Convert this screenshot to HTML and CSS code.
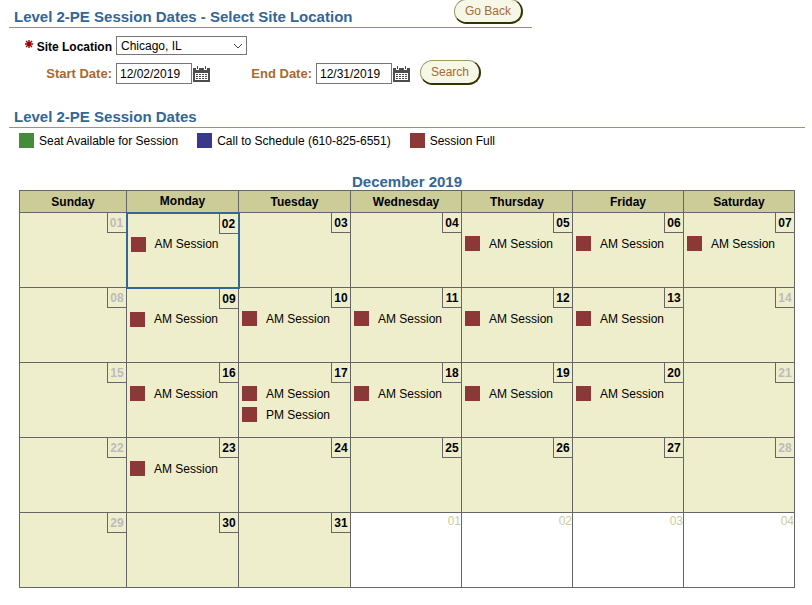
FILE: index.html
```html
<!DOCTYPE html>
<html lang="en">
  <head>
    <meta charset="utf-8">
    <title>Level 2-PE Session Dates</title>
    <link rel="stylesheet" href="styles.css">
  </head>
  <body>
    <!-- calendar icon used by both date fields -->
    <svg class="sprite" aria-hidden="true">
      <symbol id="cal-icon" viewBox="0 0 17 16">
        <path fill="#4d4d4d" d="M0 2h3v2h3V2h5v2h3V2h3v4H0z" />
        <path fill="#4d4d4d" d="M4 0h1v3H4zM12 0h1v3h-1z" />
        <path fill="#4d4d4d" fill-rule="evenodd" d="M0 5h17v11H0zM2 7v7h13V7z" />
        <path fill="#4d4d4d" d="M3 8h2v1H3zM6 8h2v1H6zM9 8h2v1H9zM12 8h2v1h-2zM3 10h2v1H3zM6 10h2v1H6zM9 10h2v1H9zM12 10h2v1h-2zM3 12h2v1H3zM6 12h2v1H6zM9 12h2v1H9zM12 12h2v1h-2z" />
      </symbol>
    </svg>

    <form class="search-form">
      <div class="region-header">
        <h1 class="region-title">Level 2-PE Session Dates - Select Site Location</h1>
        <button type="button" class="btn">Go Back</button>
      </div>
      <div class="field-row">
        <label class="field-label required" for="site">
          <svg class="star" viewBox="0 0 8 8" aria-hidden="true"><path d="M4 0v8M0 4h8M1 1l6 6M7 1L1 7" /></svg>
          Site Location
        </label>
        <select id="site" class="site-select">
          <option>Chicago, IL</option>
        </select>
      </div>
      <div class="field-row date-row">
        <label class="field-label" for="start">Start Date:</label>
        <input type="text" id="start" class="date-input" value="12/02/2019">
        <button type="button" class="cal-btn" aria-label="Pick start date"><svg><use href="#cal-icon" /></svg></button>
        <label class="field-label end-label" for="end">End Date:</label>
        <input type="text" id="end" class="date-input" value="12/31/2019">
        <button type="button" class="cal-btn" aria-label="Pick end date"><svg><use href="#cal-icon" /></svg></button>
        <button type="button" class="btn search-btn">Search</button>
      </div>
    </form>

    <section class="results">
      <h2 class="region-title results-title">Level 2-PE Session Dates</h2>
      <ul class="legend">
        <li><span class="swatch available"></span>Seat Available for Session</li>
        <li><span class="swatch call"></span>Call to Schedule (610-825-6551)</li>
        <li><span class="swatch full"></span>Session Full</li>
      </ul>

      <table class="calendar">
        <caption>December 2019</caption>
        <colgroup>
          <col class="first-col">
          <col span="2" class="wide-col">
          <col span="4">
        </colgroup>
        <thead>
          <tr>
            <th>Sunday</th>
            <th>Monday</th>
            <th>Tuesday</th>
            <th>Wednesday</th>
            <th>Thursday</th>
            <th>Friday</th>
            <th>Saturday</th>
          </tr>
        </thead>
        <tbody>
          <tr>
            <td class="off"><div class="day">01</div></td>
            <td class="today"><div class="day">02</div><div class="session"><span class="swatch full"></span>AM Session</div></td>
            <td><div class="day">03</div></td>
            <td><div class="day">04</div></td>
            <td><div class="day">05</div><div class="session"><span class="swatch full"></span>AM Session</div></td>
            <td><div class="day">06</div><div class="session"><span class="swatch full"></span>AM Session</div></td>
            <td><div class="day">07</div><div class="session"><span class="swatch full"></span>AM Session</div></td>
          </tr>
          <tr>
            <td class="off"><div class="day">08</div></td>
            <td><div class="day">09</div><div class="session"><span class="swatch full"></span>AM Session</div></td>
            <td><div class="day">10</div><div class="session"><span class="swatch full"></span>AM Session</div></td>
            <td><div class="day">11</div><div class="session"><span class="swatch full"></span>AM Session</div></td>
            <td><div class="day">12</div><div class="session"><span class="swatch full"></span>AM Session</div></td>
            <td><div class="day">13</div><div class="session"><span class="swatch full"></span>AM Session</div></td>
            <td class="off"><div class="day">14</div></td>
          </tr>
          <tr>
            <td class="off"><div class="day">15</div></td>
            <td><div class="day">16</div><div class="session"><span class="swatch full"></span>AM Session</div></td>
            <td>
              <div class="day">17</div>
              <div class="session"><span class="swatch full"></span>AM Session</div>
              <div class="session"><span class="swatch full"></span>PM Session</div>
            </td>
            <td><div class="day">18</div><div class="session"><span class="swatch full"></span>AM Session</div></td>
            <td><div class="day">19</div><div class="session"><span class="swatch full"></span>AM Session</div></td>
            <td><div class="day">20</div><div class="session"><span class="swatch full"></span>AM Session</div></td>
            <td class="off"><div class="day">21</div></td>
          </tr>
          <tr>
            <td class="off"><div class="day">22</div></td>
            <td><div class="day">23</div><div class="session"><span class="swatch full"></span>AM Session</div></td>
            <td><div class="day">24</div></td>
            <td><div class="day">25</div></td>
            <td><div class="day">26</div></td>
            <td><div class="day">27</div></td>
            <td class="off"><div class="day">28</div></td>
          </tr>
          <tr>
            <td class="off"><div class="day">29</div></td>
            <td><div class="day">30</div></td>
            <td><div class="day">31</div></td>
            <td class="other-month"><div class="day">01</div></td>
            <td class="other-month"><div class="day">02</div></td>
            <td class="other-month"><div class="day">03</div></td>
            <td class="other-month"><div class="day">04</div></td>
          </tr>
        </tbody>
      </table>
    </section>
  </body>
</html>
```
FILE: styles.css
```css
* {
  box-sizing: border-box;
}
body {
  margin: 0;
  background-color: #fff;
  color: #000;
  font-family: "Liberation Sans", Arial, Helvetica, sans-serif;
  font-size: 12px;
}
.sprite {
  display: none;
}
.search-form {
  width: fit-content;
  margin-left: 9px;
}
.region-header {
  display: flex;
  justify-content: space-between;
  align-items: flex-start;
  height: 28px;
  min-width: 523px;
  padding: 0 9px 0 5px;
  border-bottom: 1px solid #999966;
}
.region-title {
  margin: 0;
  color: #336699;
  font-size: 15px;
  font-weight: bold;
  line-height: 18px;
}
.region-header .region-title {
  padding-top: 8px;
}
.btn {
  height: 25px;
  padding: 0 10px;
  border: 1px solid #999966;
  border-right: 2px solid #333300;
  border-bottom: 2px solid #333300;
  border-radius: 13px;
  background-color: #f7f7e7;
  color: #a66a33;
  font-family: inherit;
  font-size: 12px;
  cursor: pointer;
}
.region-header .btn {
  margin-top: -1px;
}
.field-row {
  display: flex;
  align-items: center;
  padding-top: 8px;
}
.date-row {
  padding-top: 5px;
}
.field-label {
  width: 103px;
  margin-right: 4px;
  padding-top: 2px;
  color: #a66a33;
  font-size: 13px;
  font-weight: bold;
  text-align: right;
}
.required {
  display: flex;
  justify-content: flex-end;
  align-items: flex-start;
  gap: 4px;
  color: #000;
  font-size: 12px;
}
.star {
  width: 8px;
  height: 8px;
  stroke: #990000;
  stroke-width: 1.4;
}
.site-select {
  appearance: none;
  width: 131px;
  height: 19px;
  padding: 0 20px 0 4px;
  border: 1px solid #767676;
  border-radius: 0;
  background: #fff url("data:image/svg+xml,%3Csvg xmlns='http://www.w3.org/2000/svg' width='10' height='6'%3E%3Cpath d='M1 1l4 4 4-4' fill='none' stroke='%23444'/%3E%3C/svg%3E") no-repeat right 3px center;
  color: #000;
  font-family: inherit;
  font-size: 12px;
}
.date-input {
  width: 76px;
  height: 21px;
  margin-top: 1px;
  padding: 1px 3px 0;
  border: 1px solid #767676;
  font-family: inherit;
  font-size: 12px;
}
.cal-btn {
  width: 17px;
  height: 16px;
  margin: 2px 0 0 1px;
  padding: 0;
  border: 0;
  background: none;
  cursor: pointer;
}
.cal-btn svg {
  display: block;
  width: 17px;
  height: 16px;
}
.end-label {
  width: 102px;
}
.search-btn {
  margin-left: 10px;
}
.results {
  padding-top: 23px;
}
.results-title {
  margin: 0 7px 0 9px;
  padding: 0 5px 1px;
  border-bottom: 1px solid #999966;
}
.legend {
  display: flex;
  gap: 19px;
  margin: 0;
  padding: 5px 0 0 19px;
  list-style: none;
}
.legend li {
  display: flex;
  align-items: center;
  gap: 5px;
}
.swatch {
  flex: none;
  width: 15px;
  height: 15px;
}
.available {
  background-color: #448c3a;
}
.call {
  background-color: #38388c;
}
.full {
  background-color: #8c3838;
}
.calendar {
  width: calc(100% - 36px);
  margin: 25px 17px 0 19px;
  border-collapse: collapse;
  table-layout: fixed;
}
.calendar caption {
  color: #336699;
  font-size: 15px;
  font-weight: bold;
  line-height: 17px;
}
.first-col {
  width: 107px;
}
.wide-col {
  width: 112px;
}
.calendar th {
  height: 22px;
  padding: 0;
  border: 1px solid #666;
  background-color: #cccc99;
}
.calendar td {
  height: 75px;
  padding: 0;
  border: 1px solid #666;
  background-color: #eeeecc;
  vertical-align: top;
}
.calendar td.today {
  border: 2px solid #336699;
}
.day {
  width: 19px;
  height: 20px;
  margin-left: auto;
  border: solid #666;
  border-width: 0 0 1px 1px;
  font-weight: bold;
  line-height: 20px;
  text-align: center;
}
.off .day {
  color: #bbb;
}
.calendar .other-month {
  background-color: #fff;
}
.other-month .day {
  border: 0;
  color: #cccc99;
  font-weight: normal;
  line-height: 16px;
  text-align: right;
}
.session {
  display: flex;
  align-items: center;
  gap: 9px;
  height: 21px;
  padding-left: 3px;
}
```
